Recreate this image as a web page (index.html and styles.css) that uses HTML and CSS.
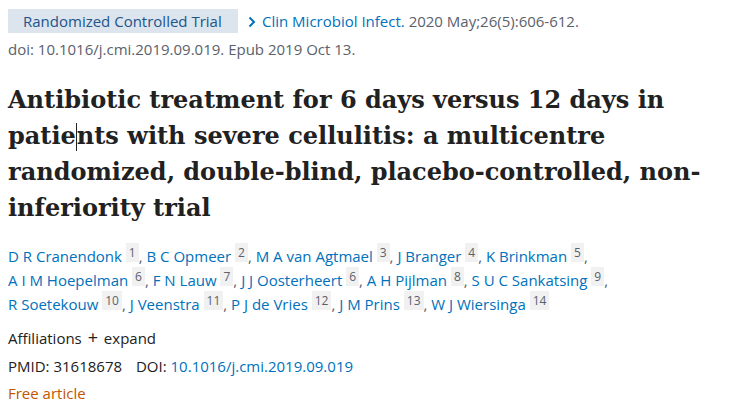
FILE: index.html
```html
<!DOCTYPE html>
<html>
<head>
<meta charset="utf-8">
<link rel="stylesheet" href="styles.css">
</head>
<body>
<main class="article">
  <div class="meta-row">
    <span class="pub-type">Randomized Controlled Trial</span>
    <span class="cite"><svg class="chev" width="8" height="12" viewBox="0 0 8 12"><path d="M1.5 1.5 L6 6 L1.5 10.5" fill="none" stroke="#0071bc" stroke-width="2"/></svg><a class="link">Clin Microbiol Infect.</a> 2020 May;26(5):606-612.</span>
  </div>
  <div class="doi-line">doi: 10.1016/j.cmi.2019.09.019. Epub 2019 Oct 13.</div>
  <h1 class="title">Antibiotic treatment for 6 days versus 12 days in<br>patie<span class="caret"></span>nts with severe cellulitis: a multicentre<br>randomized, double-blind, placebo-controlled, non-<br>inferiority trial</h1>
  <div class="authors">
    <a class="link">D R Cranendonk</a> <sup class="aff">1</sup>, <a class="link">B C Opmeer</a> <sup class="aff">2</sup>, <a class="link">M A van Agtmael</a> <sup class="aff">3</sup>, <a class="link">J Branger</a> <sup class="aff">4</sup>, <a class="link">K Brinkman</a> <sup class="aff">5</sup>,<br>
    <a class="link">A I M Hoepelman</a> <sup class="aff">6</sup>, <a class="link">F N Lauw</a> <sup class="aff">7</sup>, <a class="link">J J Oosterheert</a> <sup class="aff">6</sup>, <a class="link">A H Pijlman</a> <sup class="aff">8</sup>, <a class="link">S U C Sankatsing</a> <sup class="aff">9</sup>,<br>
    <a class="link">R Soetekouw</a> <sup class="aff">10</sup>, <a class="link">J Veenstra</a> <sup class="aff">11</sup>, <a class="link">P J de Vries</a> <sup class="aff">12</sup>, <a class="link">J M Prins</a> <sup class="aff">13</sup>, <a class="link">W J Wiersinga</a> <sup class="aff">14</sup>
  </div>
  <div class="affiliations">Affiliations <span class="plus">+</span> expand</div>
  <div class="ids">PMID: 31618678 <span class="doi-label">DOI:</span> <a class="link">10.1016/j.cmi.2019.09.019</a></div>
  <div class="free">Free article</div>
</main>
</body>
</html>
```
FILE: styles.css
```css
html, body {
  margin: 0;
  background: #fff;
}
body {
  padding: 0 8px;
  font-family: "Open Sans", "Noto Sans", sans-serif;
  font-size: 15px;
  color: #212121;
}
.link {
  color: #0071bc;
  text-decoration: none;
}
.meta-row {
  display: flex;
  align-items: center;
  gap: 10px;
  padding-top: 9px;
  color: #5b616b;
}
.pub-type {
  background: #dce4ee;
  color: #20558a;
  padding: 0 15px;
  height: 24px;
  line-height: 24px;
  width: 200px;
  white-space: nowrap;
}
.cite {
  line-height: 24px;
  white-space: nowrap;
}
.chev {
  display: inline-block;
  vertical-align: -1px;
  margin-right: 6px;
}
.doi-line {
  color: #5b616b;
  margin-top: 4px;
  line-height: 24px;
}
.title {
  font-family: "DejaVu Serif", serif;
  font-weight: bold;
  font-size: 24px;
  line-height: 36px;
  margin: 21px 0 18px;
  color: #212121;
  white-space: nowrap;
}
.caret {
  display: inline-block;
  width: 1px;
  height: 28px;
  background: #212121;
  vertical-align: -7px;
}
.authors {
  line-height: 24px;
  color: #5b616b;
}
.aff {
  background: #f1f1f1;
  color: #5b616b;
  font-size: 12px;
  padding: 1px 3px;
  vertical-align: 5px;
  line-height: 16px;
}
.affiliations {
  margin-top: 7px;
  line-height: 28px;
}
.plus {
  font-size: 18px;
  margin: 0 2px;
}
.ids {
  line-height: 28px;
  color: #212121;
}
.doi-label {
  margin-left: 10px;
}
.free {
  color: #c05600;
  line-height: 26px;
}
```
